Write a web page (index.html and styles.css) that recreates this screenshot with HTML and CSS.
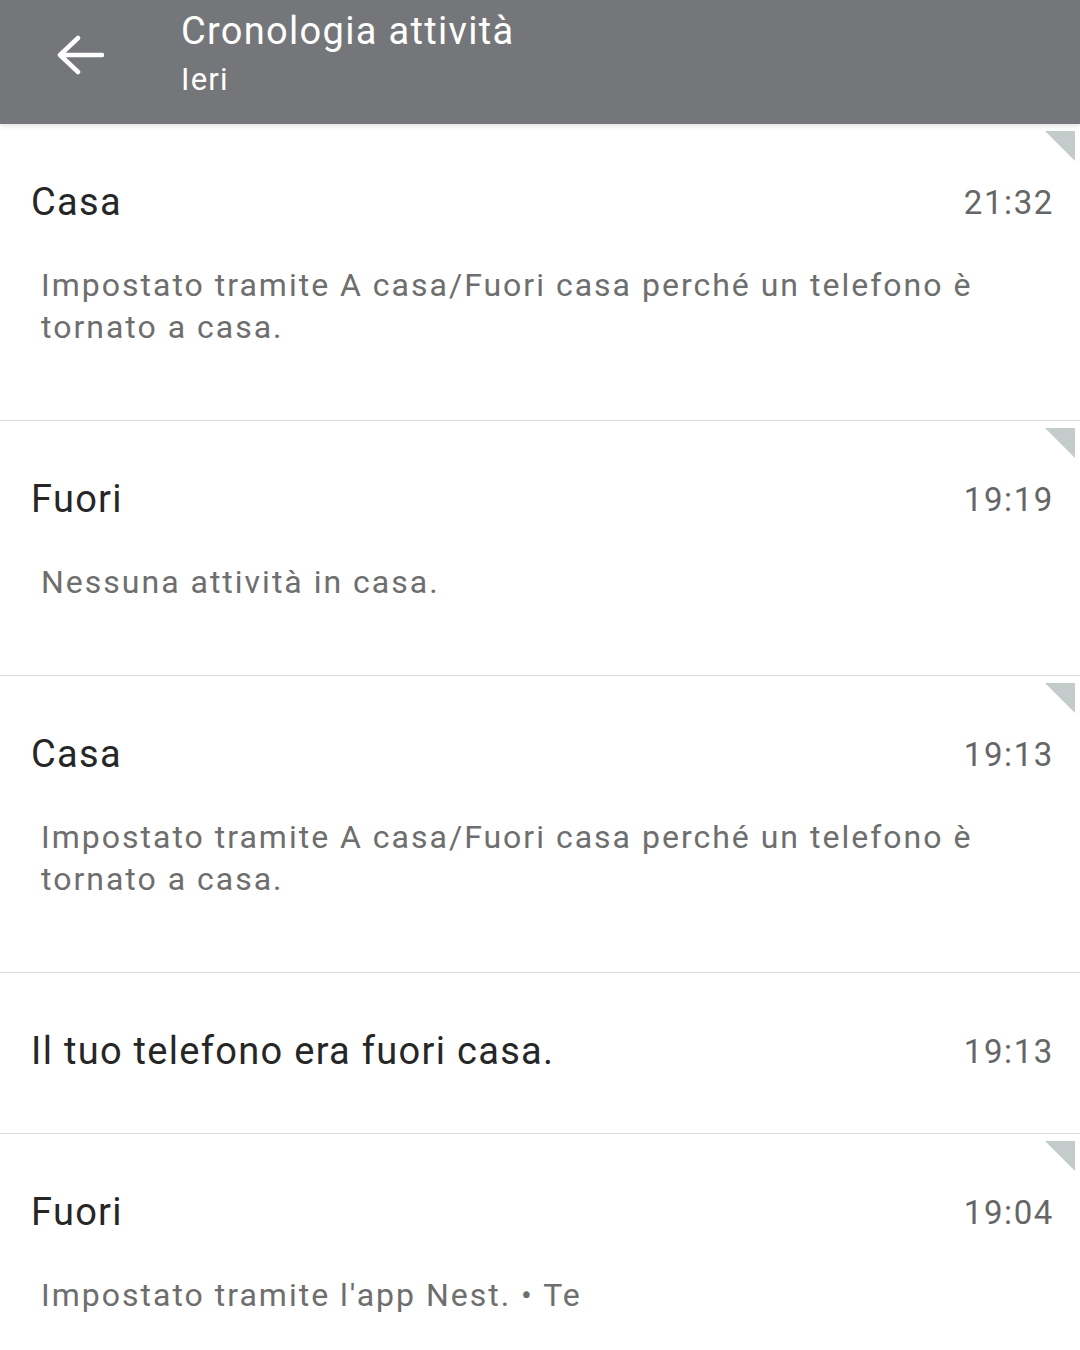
FILE: index.html
```html
<!DOCTYPE html>
<html lang="it">
<head>
    <meta charset="UTF-8">
    <meta name="viewport" content="width=device-width, initial-scale=1.0">
    <title>Cronologia attività</title>
    <link rel="stylesheet" href="styles.css">
</head>
<body>
    <header class="topbar">
        <button class="back" type="button" aria-label="Indietro">
            <svg width="48" height="40" viewBox="0 0 48 40">
                <path d="M46 20H4M22 3L4 20l18 17" fill="none" stroke="#fff" stroke-width="4.5" stroke-linecap="round" stroke-linejoin="round"/>
            </svg>
        </button>
        <div class="titles">
            <div class="title">Cronologia attività</div>
            <div class="subtitle">Ieri</div>
        </div>
    </header>

    <ul class="events">
        <li class="event flagged">
            <div class="event-head">
                <span class="event-title">Casa</span>
                <span class="event-time">21:32</span>
            </div>
            <p class="event-desc">Impostato tramite A casa/Fuori casa perché un telefono è tornato a casa.</p>
        </li>
        <li class="event flagged">
            <div class="event-head">
                <span class="event-title">Fuori</span>
                <span class="event-time">19:19</span>
            </div>
            <p class="event-desc">Nessuna attività in casa.</p>
        </li>
        <li class="event flagged">
            <div class="event-head">
                <span class="event-title">Casa</span>
                <span class="event-time">19:13</span>
            </div>
            <p class="event-desc">Impostato tramite A casa/Fuori casa perché un telefono è tornato a casa.</p>
        </li>
        <li class="event short">
            <div class="event-head">
                <span class="event-title">Il tuo telefono era fuori casa.</span>
                <span class="event-time">19:13</span>
            </div>
        </li>
        <li class="event flagged">
            <div class="event-head">
                <span class="event-title">Fuori</span>
                <span class="event-time">19:04</span>
            </div>
            <p class="event-desc">Impostato tramite l'app Nest. • Te</p>
        </li>
    </ul>
</body>
</html>
```

FILE: styles.css
```css
body {
    font-family: Roboto, "Open Sans", sans-serif;
    background-color: #fff;
    color: #2b2b2b;
    margin: 0;
    padding: 0;
}
.topbar {
    position: relative;
    z-index: 1;
    display: flex;
    align-items: center;
    height: 124px;
    background-color: #75767a;
    box-shadow: 0 2px 5px rgba(0, 0, 0, 0.12);
}
.back {
    display: flex;
    align-items: center;
    justify-content: center;
    width: 48px;
    height: 40px;
    margin-left: 56px;
    margin-top: -14px;
    padding: 0;
    background: none;
    border: none;
}
.titles {
    margin-left: 77px;
    margin-top: -18px;
    color: #fff;
}
.title {
    font-size: 38px;
    line-height: 44px;
    letter-spacing: 1.3px;
}
.subtitle {
    margin-top: 9px;
    font-size: 31px;
    line-height: 36px;
    letter-spacing: 1.2px;
}
.events {
    list-style: none;
    margin: 0;
    padding: 0;
}
.event {
    position: relative;
    padding: 55px 26px 72px 31px;
    border-bottom: 1px solid #dcdcdc;
}
.event.short {
    padding-bottom: 59px;
}
.event.flagged::after {
    content: "";
    position: absolute;
    top: 7px;
    right: 5px;
    border-top: 30px solid #c4cbcb;
    border-left: 30px solid transparent;
}
.event-head {
    display: flex;
    justify-content: space-between;
    align-items: center;
    height: 46px;
}
.event-title {
    font-size: 38px;
    letter-spacing: 1.3px;
    color: #262626;
}
.event-time {
    font-size: 33px;
    letter-spacing: 1.6px;
    color: #666;
}
.event-desc {
    margin: 39px 0 0 10px;
    font-size: 32px;
    line-height: 42px;
    letter-spacing: 2px;
    color: #6e6e6e;
    max-width: 960px;
}
```
